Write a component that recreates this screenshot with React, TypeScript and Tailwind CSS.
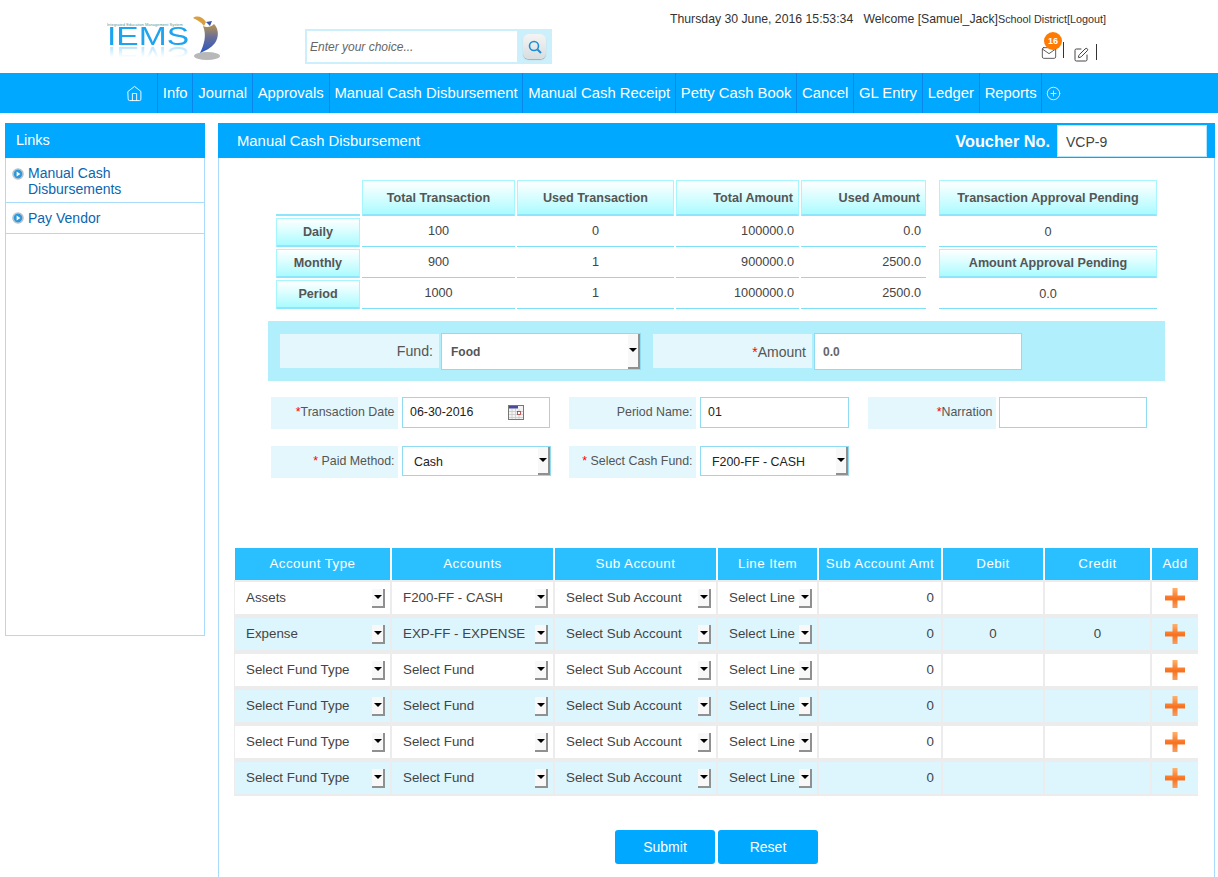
import { useId } from "react";
import { FiHome, FiMail, FiPlusCircle } from "react-icons/fi";
import { LuSquarePen } from "react-icons/lu";

const navItems = ["Info", "Journal", "Approvals", "Manual Cash Disbursement", "Manual Cash Receipt", "Petty Cash Book", "Cancel", "GL Entry", "Ledger", "Reports"];

const stats = [
    { label: "Daily", values: ["100", "0", "100000.0", "0.0"] },
    { label: "Monthly", values: ["900", "1", "900000.0", "2500.0"] },
    { label: "Period", values: ["1000", "1", "1000000.0", "2500.0"] }
];

const gridHead = ["Account Type", "Accounts", "Sub Account", "Line Item", "Sub Account Amt", "Debit", "Credit", "Add"];
const gridCols = "grid grid-cols-[155px_161px_161px_99px_122px_100px_105px_46px] gap-x-[2px]";

const rows = [
    { type: "Assets", account: "F200-FF - CASH", debit: "", credit: "" },
    { type: "Expense", account: "EXP-FF - EXPENSE", debit: "0", credit: "0" },
    { type: "Select Fund Type", account: "Select Fund", debit: "", credit: "" },
    { type: "Select Fund Type", account: "Select Fund", debit: "", credit: "" },
    { type: "Select Fund Type", account: "Select Fund", debit: "", credit: "" },
    { type: "Select Fund Type", account: "Select Fund", debit: "", credit: "" }
];

const headCell = "flex items-center bg-linear-to-b from-white to-[#a9fbff] border border-[#a6f6ff] border-b-2 border-b-[#8fe6fb] pt-[1px] font-bold text-[#555] text-[12.6px]";
const dataCell = "flex items-center bg-white border-b border-[#80dff8] text-[#444] text-[12.7px]";

const Arrow = ({ small }: { small?: boolean }) => (
    <span className={`flex shrink-0 items-center justify-center border-r-2 border-b-2 border-[#909090] bg-[#f8f8f8] ${small ? "h-[19px] w-[13px]" : "h-full w-[12px]"}`}>
        <span className="border-x-[4px] border-t-[4px] border-x-transparent border-t-black" />
    </span>
);

const Bullet = () => {
    return (
        <svg width="12" height="12" viewBox="0 0 12 12" className="shrink-0">
            <circle cx="6" cy="6" r="5.8" fill="#b4c2cc" />
            <circle cx="6" cy="6" r="4.200" fill="#2b97dc" />
            <path d="M4.600 3.600 8.400 6 4.600 8.400z" fill="#fff" />
        </svg>
    );
};

const PlusIcon = () => {
    const id = useId();
    return (
        <svg width="20" height="20" viewBox="0 0 20 20" className="-mt-[1px] blur-[0.4px]">
            <defs>
                <linearGradient id={id} x1="0" y1="0" x2="0" y2="1">
                    <stop offset="0" stopColor="#ffb26b" />
                    <stop offset="0.55" stopColor="#f8701e" />
                    <stop offset="1" stopColor="#f4a063" />
                </linearGradient>
            </defs>
            <path d="M7.500 0h5v7.500h7.500v5h-7.500v7.500h-5v-7.500h-7.500v-5h7.500z" fill={`url(#${id})`} />
        </svg>
    );
};

const Calendar = () => (
    <svg width="16" height="15" viewBox="0 0 16 15" className="shrink-0">
        <rect x="0.500" y="0.500" width="15" height="14" fill="#f3f3f3" stroke="#777" />
        <rect x="1" y="1" width="9" height="2.500" fill="#4a4a9c" />
        <path d="M1 6.500h14M1 9.500h14M1 12.500h14M4 4v10M7.500 4v10M11 4v10" stroke="#c9c9c9" strokeWidth="0.800" />
        <rect x="9.500" y="6.500" width="3" height="3" fill="#fff" stroke="#a33" strokeWidth="0.800" />
    </svg>
);

const Logo = () => (
    <div className="flex items-start">
        <div className="mt-[22px] flex w-[83px] flex-col items-start">
            <span className="h-[5px] whitespace-nowrap text-[4px] leading-[5px] text-[#5a9a9a]">Integrated Education Management System</span>
            <span className="h-[19px] origin-left scale-x-[1.29] text-[26px] leading-[19px] text-[#1ea4ef]">IEMS</span>
            <span className="h-[19px] origin-left -scale-y-100 scale-x-[1.29] bg-linear-to-t from-[#b5e3fb] to-white to-60% bg-clip-text text-[26px] leading-[19px] text-transparent">IEMS</span>
        </div>
        <svg width="30" height="48" viewBox="0 0 30 48" className="mt-[15px]">
            <defs>
                <linearGradient id="bird" x1="0" y1="0" x2="0" y2="1">
                    <stop offset="0" stopColor="#b8964e" />
                    <stop offset="0.45" stopColor="#6a6f96" />
                    <stop offset="1" stopColor="#2a55c0" />
                </linearGradient>
            </defs>
            <ellipse cx="17" cy="41" rx="13" ry="4" fill="#888" opacity="0.600" />
            <path d="M3 3C7 0 13 2 16 7L14 11C11 7 7 5 3 3z" fill="#d99f3e" />
            <path d="M13 11C17 13 21 12 24 9 29 14 29 22 25 28 21 33 15 36 10 38 14 30 17 20 13 11z" fill="url(#bird)" />
            <path d="M16 7 22 6 20 11z" fill="#3a56a8" />
        </svg>
    </div>
);

const Field = ({ cls, children }: { cls: string; children: React.ReactNode }) => (
    <div className={`flex items-center border border-[#8fdcf2] bg-white text-[12.4px] text-[#222] ${cls}`}>{children}</div>
);

const Label = ({ w, req, children }: { w: string; req?: string; children: React.ReactNode }) => (
    <div className={`flex h-[32px] items-center justify-end whitespace-pre bg-[#e4f7fc] pb-[2px] pr-[3.5px] text-[12.4px] text-[#555] ${w}`}>
        {req && <span className="text-[#f00]">{req}</span>}
        {children}
    </div>
);

const App = () => {
    return (
        <div className="h-[877px] overflow-hidden bg-white font-['Liberation_Sans',Arial,sans-serif]">
            <header className="flex h-[73px] items-start">
                <div className="ml-[107px]">
                    <Logo />
                </div>
                <div className="ml-[85px] mt-[29px] flex h-[35px] w-[247px] items-center bg-[#ccf0fb] pl-[2px]">
                    <input placeholder="Enter your choice..." className="h-[31px] w-[210px] bg-white pl-[3px] text-[12px] italic outline-none placeholder:text-[#666]" />
                    <span className="ml-[6px] flex h-[25px] w-[23px] items-center justify-center rounded-[6px] bg-linear-to-b from-[#f4f4f4] to-[#d8dde0] shadow-[0_1px_1px_#aaa]">
                        <svg width="14" height="14" viewBox="0 0 14 14" fill="none" stroke="#1b8fd6" strokeWidth="1.600">
                            <circle cx="6" cy="6" r="4.500" />
                            <path d="m9.500 9.500 3.500 3.500" strokeWidth="2" />
                        </svg>
                    </span>
                </div>
                <div className="ml-[118px] flex w-[440px] flex-col">
                    <div className="mt-[10px] flex items-baseline whitespace-pre text-[12.25px] text-[#333]">
                        Thursday 30 June, 2016 15:53:34   Welcome [Samuel_Jack]<span className="text-[10.8px]">School District[Logout]</span>
                    </div>
                    <div className="ml-[371px] mt-[16px] flex items-start">
                        <div className="relative mt-[1px]">
                            <FiMail size={16} strokeWidth={1.300} className="text-[#444]" />
                            <span className="absolute -top-[13px] left-[3px] flex h-[18px] w-[18px] items-center justify-center rounded-full bg-[#ff7a00] text-[9px] font-bold text-white">16</span>
                        </div>
                        <span className="ml-[6px] mt-[-2px] h-[16px] w-px bg-[#333]" />
                        <LuSquarePen size={16} strokeWidth={1.500} className="ml-[9px] mt-[3px] text-[#444]" />
                        <span className="ml-[7px] h-[16px] w-px bg-[#333]" />
                    </div>
                </div>
            </header>

            <nav className="flex h-[40px] items-stretch bg-[#00a8ff] text-[14.85px] text-white">
                <div className="ml-[126px] flex w-[31px] items-center">
                    <FiHome size={17} strokeWidth={1.300} />
                </div>
                {navItems.map((item) => (
                    <div key={item} className="flex items-center whitespace-nowrap border-l border-[#0a86ea] px-[4.85px]">{item}</div>
                ))}
                <div className="flex items-center border-l border-[#0a86ea] px-[4px]">
                    <FiPlusCircle size={15} strokeWidth={1.300} />
                </div>
            </nav>

            <div className="mt-[10px] flex items-start">
                <aside className="ml-[5px] h-[513px] w-[200px] border border-[#a9dcfb]">
                    <div className="-mx-px -mt-px flex h-[35px] items-center bg-[#00a8ff] pl-[11px] text-[14.5px] text-white">Links</div>
                    <div className="flex h-[45px] border-b border-[#a9dcfb] pl-[6px] pt-[7px]">
                        <span className="mt-[3px]"><Bullet /></span>
                        <span className="ml-[4px] text-[14px] leading-[16px] text-[#0a66b0]">Manual Cash<br />Disbursements</span>
                    </div>
                    <div className="flex h-[31px] items-center border-b border-[#a9dcfb] pl-[6px]">
                        <Bullet />
                        <span className="ml-[4px] text-[14px] text-[#0a66b0]">Pay Vendor</span>
                    </div>
                </aside>

                <main className="ml-[13px] h-[760px] w-[997px] border-x border-[#a9dcfb]">
                    <div className="-mx-px flex h-[35px] items-center bg-[#00a8ff] pl-[19px] text-white">
                        <span className="mt-[1px] text-[14.85px]">Manual Cash Disbursement</span>
                        <span className="ml-auto mt-[2px] text-[16.3px] font-bold">Voucher No.</span>
                        <input readOnly value="VCP-9" className="ml-[7px] mr-[8px] h-[32px] w-[150px] border border-[#b5e6fb] bg-white pl-[8px] pt-[2px] text-[14px] text-[#444] outline-none" />
                    </div>

                    <div className="ml-[57px] mt-[22px] flex items-start">
                        <div className="grid grid-cols-[84px_153px_157px_123px_125px] grid-rows-[36px_29px_29px_29px] gap-[2px]">
                            <div className="self-end border-b-2 border-[#8fe6fb]" />
                            <div className={`${headCell} justify-center`}>Total Transaction</div>
                            <div className={`${headCell} justify-center`}>Used Transaction</div>
                            <div className={`${headCell} justify-end pr-[5px]`}>Total Amount</div>
                            <div className={`${headCell} justify-end pr-[5px]`}>Used Amount</div>
                            {stats.map((row) => (
                                <div key={row.label} className="contents">
                                    <div className={`${headCell} justify-center`}>{row.label}</div>
                                    <div className={`${dataCell} justify-center`}>{row.values[0]}</div>
                                    <div className={`${dataCell} justify-center`}>{row.values[1]}</div>
                                    <div className={`${dataCell} justify-end pr-[5px]`}>{row.values[2]}</div>
                                    <div className={`${dataCell} justify-end pr-[5px]`}>{row.values[3]}</div>
                                </div>
                            ))}
                        </div>
                        <div className="ml-[13px] grid w-[218px] grid-rows-[36px_31px_31px_31px]">
                            <div className={`${headCell} justify-center`}>Transaction Approval Pending</div>
                            <div className={`${dataCell} justify-center pt-[3px]`}>0</div>
                            <div className={`${headCell} mt-[2px] justify-center`}>Amount Approval Pending</div>
                            <div className={`${dataCell} justify-center pt-[3px]`}>0.0</div>
                        </div>
                    </div>

                    <div className="ml-[49px] mt-[12px] flex h-[60px] w-[897px] items-center bg-[#b2effc] pl-[12px]">
                        <div className="flex h-[34px] w-[159px] items-center justify-end bg-[#e4f7fc] pr-[6px] pt-[2px] text-[14.2px] text-[#555]">Fund:</div>
                        <div className="ml-[2px] flex h-[37px] w-[200px] items-center border border-[#8fdcf2] bg-white pl-[9px] text-[12px] font-bold text-[#555]">
                            <span className="mt-[1px]">Food</span>
                            <span className="ml-auto h-full"><Arrow /></span>
                        </div>
                        <div className="ml-[12px] flex h-[34px] w-[159px] items-center justify-end bg-[#e4f7fc] pr-[6px] pt-[2px] text-[14px] text-[#555]">
                            <span className="text-[#f00]">*</span>Amount
                        </div>
                        <div className="ml-[2px] flex h-[37px] w-[208px] items-center border border-[#8fdcf2] bg-white pl-[8px] text-[12px] font-bold text-[#666]">
                            <span className="mt-[1px]">0.0</span>
                        </div>
                    </div>

                    <div className="ml-[52px] mt-[16px] flex items-start">
                        <Label w="w-[127px]" req="*">Transaction Date</Label>
                        <Field cls="ml-[4px] h-[31px] w-[148px]">
                            <span className="ml-[7px]">06-30-2016</span>
                            <span className="ml-[35px]"><Calendar /></span>
                        </Field>
                        <Label w="ml-[19px] w-[127px]">Period Name:</Label>
                        <Field cls="ml-[4px] h-[31px] w-[149px]"><span className="ml-[7px]">01</span></Field>
                        <Label w="ml-[19px] w-[128px]" req="*">Narration</Label>
                        <Field cls="ml-[3px] h-[31px] w-[148px]"><span /></Field>
                    </div>
                    <div className="ml-[52px] mt-[17px] flex items-start">
                        <Label w="w-[127px]" req="* ">Paid Method:</Label>
                        <Field cls="ml-[4px] h-[30px] w-[149px]">
                            <span className="ml-[11px] mt-[2px]">Cash</span>
                            <span className="ml-auto h-full"><Arrow /></span>
                        </Field>
                        <Label w="ml-[18px] w-[127px]" req="* ">Select Cash Fund:</Label>
                        <Field cls="ml-[4px] h-[30px] w-[149px]">
                            <span className="ml-[11px] mt-[2px]">F200-FF - CASH</span>
                            <span className="ml-auto h-full"><Arrow /></span>
                        </Field>
                    </div>

                    <div className="ml-[15px] mt-[70px] w-[964px] bg-[#ececec] pb-[2px] text-[13.33px] text-[#444]">
                        <div className={`${gridCols} bg-white pl-px`}>
                            {gridHead.map((h) => (
                                <div key={h} className="flex h-[32px] items-center justify-center whitespace-nowrap bg-[#2abfff] tracking-[0.45px] text-white">{h}</div>
                            ))}
                        </div>
                        {rows.map((row, i) => {
                            const bg = i % 2 === 1 ? "bg-[#ddf6fe]" : "bg-white";
                            const cell = `flex h-[32px] items-center ${bg}`;
                            return (
                                <div key={i} className={`${gridCols} pl-px pt-[2px] ${i === 0 ? "" : "mt-[2px]"}`}>
                                    <div className={`${cell} justify-between pl-[11px] pr-[5px]`}>{row.type}<Arrow small /></div>
                                    <div className={`${cell} justify-between pl-[11px] pr-[5px]`}>{row.account}<Arrow small /></div>
                                    <div className={`${cell} justify-between pl-[11px] pr-[5px]`}>Select Sub Account<Arrow small /></div>
                                    <div className={`${cell} justify-between pl-[11px] pr-[5px]`}>Select Line<Arrow small /></div>
                                    <div className={`${cell} justify-end pr-[7px]`}>0</div>
                                    <div className={`${cell} justify-center`}>{row.debit}</div>
                                    <div className={`${cell} justify-center`}>{row.credit}</div>
                                    <div className={`${cell} justify-center`}><PlusIcon /></div>
                                </div>
                            );
                        })}
                    </div>

                    <div className="ml-[396px] mt-[34px] flex gap-[3px]">
                        <button className="h-[34px] w-[100px] rounded-[3px] bg-[#00a8ff] text-[14px] text-white">Submit</button>
                        <button className="h-[34px] w-[100px] rounded-[3px] bg-[#00a8ff] text-[14px] text-white">Reset</button>
                    </div>
                </main>
            </div>
        </div>
    );
};

export default App;
